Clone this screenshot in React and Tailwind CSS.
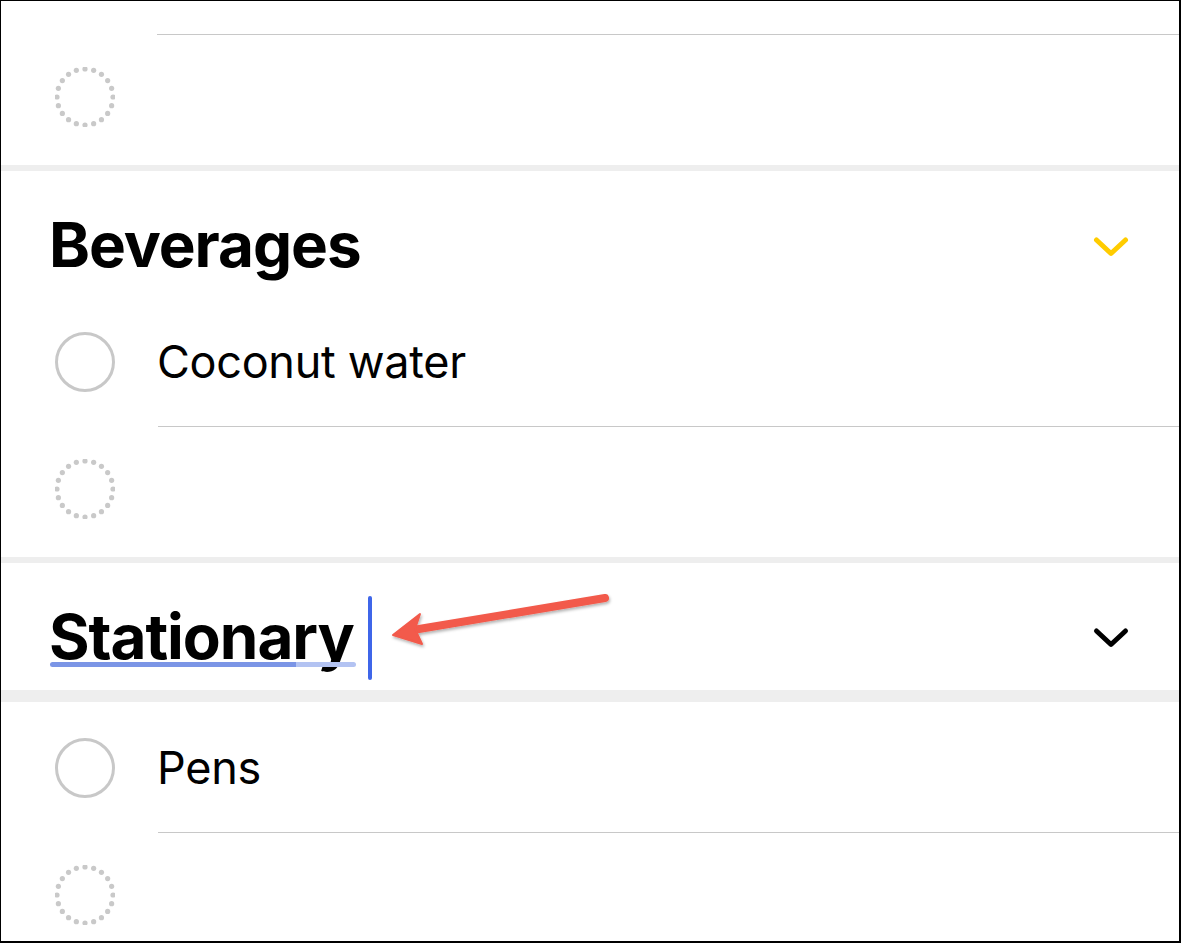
import React from "react";

function DottedCircle() {
  const dots = [];
  const n = 20;
  for (let i = 0; i < n; i++) {
    const a = (i / n) * Math.PI * 2;
    dots.push(
      <circle key={i} cx={30 + 28 * Math.cos(a)} cy={30 + 28 * Math.sin(a)} r="2.6" fill="#c9c9c9" />
    );
  }
  return (
    <svg width="60" height="60" viewBox="0 0 60 60" className="shrink-0">
      {dots}
    </svg>
  );
}

function OpenCircle() {
  return (
    <svg width="60" height="60" viewBox="0 0 60 60" className="shrink-0">
      <circle cx="30" cy="30" r="28.5" fill="none" stroke="#c8c8c8" strokeWidth="3" />
    </svg>
  );
}

function Chevron({ color }) {
  return (
    <svg width="40" height="26" viewBox="0 0 40 26" className="shrink-0">
      <polyline points="5.5,5 20,18.5 34.5,5" fill="none" stroke={color} strokeWidth="5" strokeLinecap="round" strokeLinejoin="round" />
    </svg>
  );
}

function ItemRow({ text }) {
  return (
    <div className="relative flex h-[131px] items-center pl-[54px]">
      <OpenCircle />
      <span className="ml-[42px] text-[45px] leading-none tracking-[-0.3px] text-black">{text}</span>
      <div className="absolute bottom-0 left-[157px] right-0 h-px bg-[#c8c8c8]" />
    </div>
  );
}

function EmptyRow({ h = "h-[130px]" }) {
  return (
    <div className={`flex ${h} items-center pb-[6px] pl-[54px]`}>
      <DottedCircle />
    </div>
  );
}

export default function App() {
  return (
    <div
      className="relative h-[943px] w-[1181px] overflow-hidden border-t border-l border-r-2 border-b-2 border-black bg-white"
      style={{ fontFamily: "Inter, 'Noto Sans', sans-serif" }}
    >
      <div className="relative h-[34px]">
        <div className="absolute bottom-0 left-[156px] right-0 h-px bg-[#c8c8c8]" />
      </div>
      <EmptyRow />
      <div className="h-[6px] bg-[#eeeeee]" />

      <div className="flex h-[125px] items-start justify-between pl-[48px] pr-[48px] pt-[43px]">
        <h2 className="text-[62px] font-bold leading-none tracking-[-1.05px] text-black">Beverages</h2>
        <div className="mt-[21px]">
          <Chevron color="#ffcc00" />
        </div>
      </div>
      <ItemRow text="Coconut water" />
      <EmptyRow />
      <div className="h-[6px] bg-[#eeeeee]" />

      <div className="flex h-[127px] items-start justify-between pl-[48px] pr-[48px] pt-[43px]">
        <div className="flex items-start">
          <div className="relative">
            <h2 className="text-[62px] font-bold leading-none tracking-[-1.05px] text-black">Stationary</h2>
            <div className="absolute left-[1px] right-[-2px] top-[56px] flex h-[5px]">
              <div className="h-full w-[246px] rounded-l-full bg-[#7b95e6]" />
              <div className="h-full flex-1 rounded-r-full bg-[#b3c3f2]" />
            </div>
          </div>
          <div className="ml-[14px] mt-[-10px] h-[84px] w-[4px] rounded-full bg-[#3f66e9]" />
        </div>
        <div className="mt-[20px]">
          <Chevron color="#000000" />
        </div>
      </div>
      <div className="h-[12px] bg-[#eeeeee]" />
      <ItemRow text="Pens" />
      <EmptyRow />

      <svg className="pointer-events-none absolute left-0 top-0" width="1181" height="943" viewBox="0 0 1181 943">
        <defs>
          <filter id="sh" x="-20%" y="-50%" width="140%" height="200%">
            <feDropShadow dx="1" dy="2" stdDeviation="1.5" floodColor="#000" floodOpacity="0.3" />
          </filter>
        </defs>
        <g filter="url(#sh)" fill="#f25a4b" stroke="#f25a4b">
          <line x1="604" y1="597" x2="412" y2="629" strokeWidth="8" strokeLinecap="round" />
          <path d="M392,634 L419,613 L414,628 L421,643 Z" strokeWidth="2" strokeLinejoin="round" />
        </g>
      </svg>
    </div>
  );
}
